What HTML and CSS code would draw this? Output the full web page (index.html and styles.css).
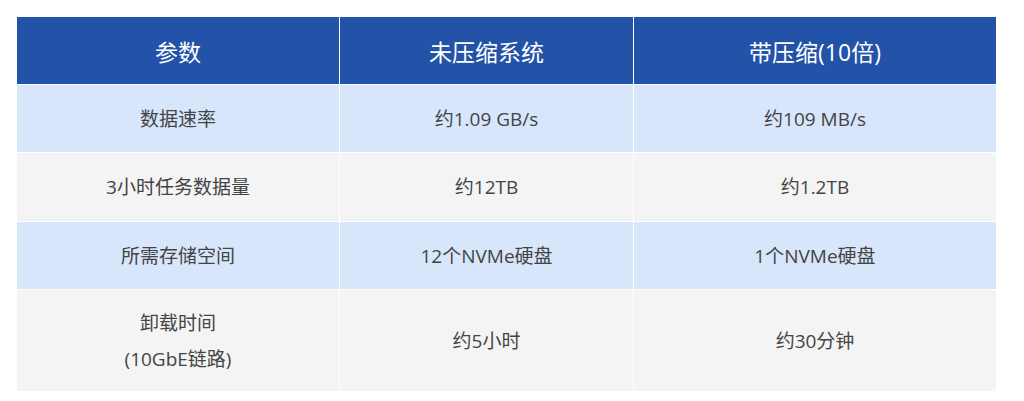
FILE: index.html
```html
<!DOCTYPE html>
<html lang="zh-CN">
<head>
<meta charset="utf-8">
<title>压缩对比</title>
<link rel="stylesheet" href="styles.css">
</head>
<body>
<div class="wrap">
<table class="cmp">
<colgroup><col class="c1"><col class="c2"><col class="c3"></colgroup>
<thead>
<tr class="head"><th>参数</th><th>未压缩系统</th><th>带压缩(10倍)</th></tr>
</thead>
<tbody>
<tr class="blue r68"><td>数据速率</td><td>约1.09 GB/s</td><td>约109 MB/s</td></tr>
<tr class="gray r69"><td>3小时任务数据量</td><td>约12TB</td><td>约1.2TB</td></tr>
<tr class="blue r68"><td>所需存储空间</td><td>12个NVMe硬盘</td><td>1个NVMe硬盘</td></tr>
<tr class="gray r102"><td>卸载时间<br>(10GbE链路)</td><td>约5小时</td><td>约30分钟</td></tr>
</tbody>
</table>
</div>
</body>
</html>
```
FILE: styles.css
```css
html, body {
  margin: 0;
  padding: 0;
  background: #ffffff;
}
.wrap {
  padding: 16px 0 0 16px;
}
.cmp {
  border-collapse: collapse;
  width: 980px;
  table-layout: fixed;
  font-family: "Open Sans", "Noto Sans CJK SC", sans-serif;
}
.c1 { width: 323px; }
.c2 { width: 294px; }
.c3 { width: 363px; }
.cmp th, .cmp td {
  border: 1px solid #ffffff;
  text-align: center;
  vertical-align: middle;
  padding: 0;
}
.cmp th {
  background: #2353a8;
  color: #ffffff;
  font-size: 23px;
  font-weight: 400;
}
.head { height: 68px; }
.r68 { height: 68px; }
.r69 { height: 69px; }
.r102 { height: 102px; }
.cmp td {
  color: #444444;
  font-size: 19px;
  line-height: 36px;
}
.blue td { background: #d7e6fb; }
.gray td { background: #f4f4f4; }
```
